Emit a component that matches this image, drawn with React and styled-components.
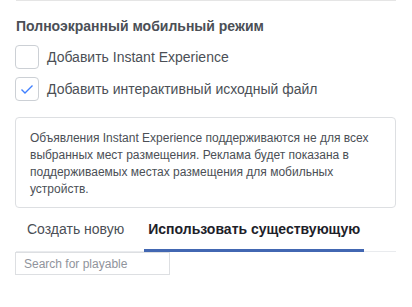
import React, { useState } from 'react';
import styled, { createGlobalStyle } from 'styled-components';

const GlobalStyle = createGlobalStyle`
  html, body {
    margin: 0;
    padding: 0;
    background: #fff;
  }
  body {
    font-family: "Liberation Sans", Arial, Helvetica, sans-serif;
  }
`;

const Section = styled.div`
  width: 380px;
  margin-left: 16px;
  border-top: 1px solid #e5e5e5;
  padding-top: 16px;
`;

const Heading = styled.div`
  font-size: 14px;
  line-height: 18px;
  font-weight: 700;
  color: #4b4f56;
  margin-bottom: 10px;
`;

const CheckList = styled.div`
  display: flex;
  flex-direction: column;
  gap: 8px;
`;

const CheckRow = styled.label`
  display: flex;
  align-items: center;
  gap: 8px;
  font-size: 14px;
  color: #4b4f56;
  cursor: pointer;
  margin-left: -1px;
`;

const Box = styled.span`
  width: 22px;
  height: 22px;
  border: 1px solid #ccd0d5;
  border-radius: 4px;
  display: flex;
  align-items: center;
  justify-content: center;
  background: #fff;
`;

const Notice = styled.div`
  margin-top: 16px;
  margin-left: -1px;
  border: 1px solid #dddfe2;
  border-radius: 4px;
  padding: 12px 14px 9px;
  font-size: 12px;
  line-height: 17px;
  color: #4b4f56;
`;

const Tabs = styled.div`
  display: flex;
  border-bottom: 1px solid #e9ebee;
  margin-top: 1px;
`;

const Tab = styled.div`
  margin: 0 8px -1px;
  padding: 11px 4px 11px;
  font-size: 14px;
  line-height: 18px;
  font-weight: ${(p) => (p.active ? 700 : 400)};
  color: ${(p) => (p.active ? '#1d2129' : '#4b4f56')};
  border-bottom: 3px solid ${(p) => (p.active ? '#4267b2' : 'transparent')};
  cursor: pointer;
  &:first-child {
    margin-left: 7px;
  }
`;

const Search = styled.input`
  display: block;
  width: 155px;
  height: 23px;
  box-sizing: border-box;
  margin-left: -1px;
  border: 1px solid #dddfe2;
  padding: 0 8px;
  font-family: "Liberation Sans", Arial, sans-serif;
  font-size: 12px;
  color: #1d2129;
  outline: none;
  &::placeholder {
    color: #90949c;
  }
`;

const Check = () => (
  <svg width="16" height="16" viewBox="0 0 16 16">
    <path d="M2.5 8.5 L6 12 L13.5 4.5" fill="none" stroke="#4080ff" strokeWidth="1.4" />
  </svg>
);

const App = () => {
  const [tab, setTab] = useState(1);
  const [checks, setChecks] = useState([false, true]);

  const items = ['Добавить Instant Experience', 'Добавить интерактивный исходный файл'];

  return (
    <>
      <GlobalStyle />
      <Section>
        <Heading>Полноэкранный мобильный режим</Heading>
        <CheckList>
          {items.map((label, i) => (
            <CheckRow
              key={label}
              onClick={() => setChecks(checks.map((c, j) => (j === i ? !c : c)))}
            >
              <Box>{checks[i] && <Check />}</Box>
              {label}
            </CheckRow>
          ))}
        </CheckList>
        <Notice>
          Объявления Instant Experience поддерживаются не для всех выбранных мест
          размещения. Реклама будет показана в поддерживаемых местах размещения для
          мобильных устройств.
        </Notice>
        <Tabs>
          <Tab active={tab === 0} onClick={() => setTab(0)}>
            Создать новую
          </Tab>
          <Tab active={tab === 1} onClick={() => setTab(1)}>
            Использовать существующую
          </Tab>
        </Tabs>
        <Search placeholder="Search for playable" />
      </Section>
    </>
  );
};

export default App;
